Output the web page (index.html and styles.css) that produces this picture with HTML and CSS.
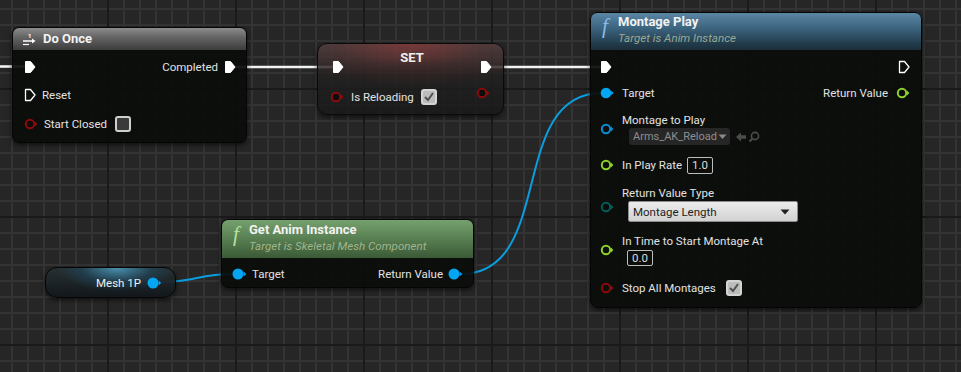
FILE: index.html
```html
<!DOCTYPE html>
<html lang="en">
<head>
    <meta charset="UTF-8">
    <title>Blueprint Graph</title>
    <link rel="stylesheet" href="styles.css">
</head>
<body>
    <div class="graph">
        <svg class="wires" width="961" height="372" viewBox="0 0 961 372">
            <g fill="none" stroke="#f2f2f2" stroke-width="2.6">
                <path d="M0 66.5H26"/>
                <path d="M234 67H334"/>
                <path d="M490 67H602"/>
            </g>
            <g fill="none" stroke="#0a9ee0" stroke-width="2">
                <path d="M160 282C198 282 196 274 234 274"/>
                <path d="M461 274C556 274 507 93 602 93"/>
            </g>
        </svg>

        <!-- Do Once -->
        <div class="node do-once">
            <div class="node-head head-gray">
                <svg class="once-icon" width="16" height="14" viewBox="0 0 16 14">
                    <text x="6" y="6" font-size="6" font-weight="bold" fill="#fff" font-family="Roboto, sans-serif">1</text>
                    <path d="M1 9H12" stroke="#fff" stroke-width="1.5"/>
                    <path d="M10 6.5L13.5 9L10 11.5Z" fill="#fff"/>
                    <path d="M1 12.5H7" stroke="#fff" stroke-width="1.2"/>
                </svg>
                <span class="node-title">Do Once</span>
            </div>
            <div class="node-body">
                <div class="row">
                    <svg class="pin" width="12" height="14" viewBox="0 0 12 14"><path d="M1.5 1.5h5l4.5 5.5-4.5 5.5h-5z" fill="#fff" stroke="#fff" stroke-linejoin="round"/></svg>
                    <span class="grow"></span>
                    <span class="label">Completed</span>
                    <svg class="pin" width="12" height="14" viewBox="0 0 12 14"><path d="M1.5 1.5h5l4.5 5.5-4.5 5.5h-5z" fill="#fff" stroke="#fff" stroke-linejoin="round"/></svg>
                </div>
                <div class="row">
                    <svg class="pin" width="12" height="14" viewBox="0 0 12 14"><path d="M1.5 1.5h5l4.5 5.5-4.5 5.5h-5z" fill="none" stroke="#fff" stroke-width="1.3" stroke-linejoin="round"/></svg>
                    <span class="label">Reset</span>
                </div>
                <div class="row row-tall">
                    <svg class="pin" width="14" height="12" viewBox="0 0 14 12"><circle cx="6" cy="6" r="4.2" fill="#0c0c0c" stroke="#8e0a0a" stroke-width="2"/><path d="M11 3.6l2.4 2.4-2.4 2.4z" fill="#8e0a0a"/></svg>
                    <span class="label">Start Closed</span>
                    <span class="check"></span>
                </div>
            </div>
        </div>

        <!-- SET -->
        <div class="node set-node">
            <div class="set-top">
                <svg class="pin set-pin" width="12" height="14" viewBox="0 0 12 14"><path d="M1.5 1.5h5l4.5 5.5-4.5 5.5h-5z" fill="#fff" stroke="#fff" stroke-linejoin="round"/></svg>
                <span class="set-title">SET</span>
                <svg class="pin set-pin" width="12" height="14" viewBox="0 0 12 14"><path d="M1.5 1.5h5l4.5 5.5-4.5 5.5h-5z" fill="#fff" stroke="#fff" stroke-linejoin="round"/></svg>
            </div>
            <div class="set-var">
                <svg class="pin" width="14" height="12" viewBox="0 0 14 12"><circle cx="6" cy="6" r="4.2" fill="#0c0c0c" stroke="#8e0a0a" stroke-width="2"/><path d="M11 3.6l2.4 2.4-2.4 2.4z" fill="#8e0a0a"/></svg>
                <span class="label">Is Reloading</span>
                <span class="check checked">
                    <svg width="12" height="12" viewBox="0 0 12 12"><path d="M2 6l3 3 5-7" fill="none" stroke="#505050" stroke-width="2"/></svg>
                </span>
                <span class="grow"></span>
                <svg class="pin pin-up" width="14" height="12" viewBox="0 0 14 12"><circle cx="6" cy="6" r="4.2" fill="#0c0c0c" stroke="#8e0a0a" stroke-width="2"/><path d="M11 3.6l2.4 2.4-2.4 2.4z" fill="#8e0a0a"/></svg>
            </div>
        </div>

        <!-- Montage Play -->
        <div class="node montage">
            <div class="node-head head-blue func-head">
                <span class="func-f f-blue">f</span>
                <div class="func-titles">
                    <span class="node-title">Montage Play</span>
                    <span class="subtitle">Target is Anim Instance</span>
                </div>
            </div>
            <div class="node-body montage-body">
                <div class="row row-m">
                    <svg class="pin" width="12" height="14" viewBox="0 0 12 14"><path d="M1.5 1.5h5l4.5 5.5-4.5 5.5h-5z" fill="#fff" stroke="#fff" stroke-linejoin="round"/></svg>
                    <span class="grow"></span>
                    <svg class="pin" width="12" height="14" viewBox="0 0 12 14"><path d="M1.5 1.5h5l4.5 5.5-4.5 5.5h-5z" fill="none" stroke="#fff" stroke-width="1.3" stroke-linejoin="round"/></svg>
                </div>
                <div class="row row-m">
                    <svg class="pin" width="14" height="12" viewBox="0 0 14 12"><circle cx="6" cy="6" r="5.3" fill="#02a6f2"/><path d="M11.2 3.6l2.4 2.4-2.4 2.4z" fill="#02a6f2"/></svg>
                    <span class="label">Target</span>
                    <span class="grow"></span>
                    <span class="label">Return Value</span>
                    <svg class="pin" width="14" height="12" viewBox="0 0 14 12"><circle cx="6" cy="6" r="4.2" fill="#0c0c0c" stroke="#8ed12a" stroke-width="2"/><path d="M11 3.6l2.4 2.4-2.4 2.4z" fill="#8ed12a"/></svg>
                </div>
                <div class="row-block first-block">
                    <svg class="pin" width="14" height="12" viewBox="0 0 14 12"><circle cx="6" cy="6" r="4.2" fill="#0c0c0c" stroke="#0a8fd6" stroke-width="2"/><path d="M11 3.6l2.4 2.4-2.4 2.4z" fill="#0a8fd6"/></svg>
                    <div class="block-col">
                        <span class="label">Montage to Play</span>
                        <div class="asset-line">
                            <span class="asset">Arms_AK_Reload<svg width="9" height="6" viewBox="0 0 9 6"><path d="M0.5 0.5h8L4.5 5z" fill="#8a8a8a"/></svg></span>
                            <svg class="asset-tools" width="28" height="14" viewBox="0 0 28 14">
                                <path d="M1 7L6 2.5V5.2H11V8.8H6V11.5Z" fill="#4c4c4c"/>
                                <circle cx="20" cy="6" r="3.6" fill="none" stroke="#4c4c4c" stroke-width="1.6"/>
                                <path d="M17.4 8.6L14.5 11.5" stroke="#4c4c4c" stroke-width="2"/>
                            </svg>
                        </div>
                    </div>
                </div>
                <div class="row-block row-s">
                    <svg class="pin" width="14" height="12" viewBox="0 0 14 12"><circle cx="6" cy="6" r="4.2" fill="#0c0c0c" stroke="#8ed12a" stroke-width="2"/><path d="M11 3.6l2.4 2.4-2.4 2.4z" fill="#8ed12a"/></svg>
                    <span class="label">In Play Rate</span>
                    <span class="num">1.0</span>
                </div>
                <div class="row-block">
                    <svg class="pin pin-low" width="14" height="12" viewBox="0 0 14 12"><circle cx="6" cy="6" r="4.2" fill="#0c0c0c" stroke="#045c5c" stroke-width="2"/><path d="M11 3.6l2.4 2.4-2.4 2.4z" fill="#045c5c"/></svg>
                    <div class="block-col">
                        <span class="label">Return Value Type</span>
                        <span class="combo">Montage Length<svg width="10" height="6" viewBox="0 0 10 6"><path d="M0.5 0.5h9L5 5.5z" fill="#222"/></svg></span>
                    </div>
                </div>
                <div class="row-block">
                    <svg class="pin" width="14" height="12" viewBox="0 0 14 12"><circle cx="6" cy="6" r="4.2" fill="#0c0c0c" stroke="#8ed12a" stroke-width="2"/><path d="M11 3.6l2.4 2.4-2.4 2.4z" fill="#8ed12a"/></svg>
                    <div class="block-col">
                        <span class="label">In Time to Start Montage At</span>
                        <span class="num num-under">0.0</span>
                    </div>
                </div>
                <div class="row-block row-s last-block">
                    <svg class="pin" width="14" height="12" viewBox="0 0 14 12"><circle cx="6" cy="6" r="4.2" fill="#0c0c0c" stroke="#8e0a0a" stroke-width="2"/><path d="M11 3.6l2.4 2.4-2.4 2.4z" fill="#8e0a0a"/></svg>
                    <span class="label">Stop All Montages</span>
                    <span class="check checked">
                        <svg width="12" height="12" viewBox="0 0 12 12"><path d="M2 6l3 3 5-7" fill="none" stroke="#505050" stroke-width="2"/></svg>
                    </span>
                </div>
            </div>
        </div>

        <!-- Get Anim Instance -->
        <div class="node anim">
            <div class="node-head head-green func-head">
                <span class="func-f f-green">f</span>
                <div class="func-titles">
                    <span class="node-title">Get Anim Instance</span>
                    <span class="subtitle">Target is Skeletal Mesh Component</span>
                </div>
            </div>
            <div class="node-body anim-body">
                <div class="row">
                    <svg class="pin" width="15" height="12" viewBox="0 0 15 12"><circle cx="6" cy="6" r="5.5" fill="#02a6f2"/><path d="M11.6 3.6l2.6 2.4-2.6 2.4z" fill="#02a6f2"/></svg>
                    <span class="label">Target</span>
                    <span class="grow"></span>
                    <span class="label">Return Value</span>
                    <svg class="pin" width="15" height="12" viewBox="0 0 15 12"><circle cx="6" cy="6" r="5.5" fill="#02a6f2"/><path d="M11.6 3.6l2.6 2.4-2.6 2.4z" fill="#02a6f2"/></svg>
                </div>
            </div>
        </div>

        <!-- Mesh 1P variable -->
        <div class="node mesh">
            <span class="label">Mesh 1P</span>
            <svg class="pin" width="15" height="12" viewBox="0 0 15 12"><circle cx="6" cy="6" r="5.5" fill="#02a6f2"/><path d="M11.6 3.6l2.6 2.4-2.6 2.4z" fill="#02a6f2"/></svg>
        </div>
    </div>
</body>
</html>
```

FILE: styles.css
```css
body {
    margin: 0;
    background: #262626;
    font-family: Roboto, "Noto Sans", sans-serif;
}

.graph {
    position: relative;
    width: 961px;
    height: 372px;
    overflow: hidden;
    background-color: #262626;
    background-image:
        linear-gradient(90deg, #1a1a1a 2px, transparent 2px),
        linear-gradient(#1a1a1a 2px, transparent 2px),
        linear-gradient(90deg, #343434 2px, transparent 2px),
        linear-gradient(#343434 2px, transparent 2px);
    background-size: 128px 128px, 128px 128px, 16px 16px, 16px 16px;
    background-position: 107px 0, 0 88px, 11px 0, 0 8px;
}

.wires {
    position: absolute;
    left: 0;
    top: 0;
}

/* nodes sit on a free canvas */
.node {
    position: absolute;
    box-sizing: border-box;
    background: rgba(11, 13, 11, 0.93);
    border: 1px solid #050505;
    border-radius: 7px;
    box-shadow: 0 2px 5px rgba(0, 0, 0, 0.6);
    color: #e2e2e2;
    font-size: 11.5px;
}

.node-head {
    display: flex;
    align-items: center;
    border-radius: 6px 6px 0 0;
}

.node-title {
    font-size: 13px;
    font-weight: bold;
    color: #f2f2f2;
    line-height: 16px;
}

.subtitle {
    font-size: 11.6px;
    font-style: italic;
    line-height: 17px;
    color: rgba(196, 208, 170, 0.72);
}

.head-gray {
    height: 22px;
    padding-left: 9px;
    gap: 5px;
    background: linear-gradient(#8c8c8c, #626262 45%, #3c3c3c);
}

.head-blue {
    background: linear-gradient(180deg, #5a86a4 0%, #3d6580 40%, #213949 85%, #1c2f3b 100%);
}

.head-green {
    background: linear-gradient(180deg, #77a06f 0%, #5a8254 45%, #3b5a37 100%);
}

.func-head {
    align-items: flex-start;
    height: 37px;
    box-sizing: border-box;
    padding: 1px 10px 0 11px;
}

.func-titles {
    display: flex;
    flex-direction: column;
}

.func-f {
    font-family: "Liberation Serif", serif;
    font-style: italic;
    font-size: 21px;
    line-height: 22px;
    width: 16px;
    margin-top: 1px;
}

.f-blue { color: #86bdea; }
.f-green { color: #b4e29e; }

.row {
    display: flex;
    align-items: center;
    height: 28px;
    padding: 0 10px 0 11px;
    gap: 6px;
}

.row-tall {
    height: 30px;
}

.grow {
    flex: 1;
}

.pin {
    flex: none;
    display: block;
}

.label {
    white-space: nowrap;
    line-height: 16px;
}

.node-body {
    padding-top: 3px;
}

.check {
    box-sizing: border-box;
    width: 16px;
    height: 16px;
    margin-left: 2px;
    border: 2px solid #cfcfcf;
    border-radius: 3px;
    background: #3a3a3a;
    display: flex;
    align-items: center;
    justify-content: center;
}

.check.checked {
    background: #bcbcbc;
    border-color: #d4d4d4;
}

/* Do Once */
.do-once {
    left: 12px;
    top: 27px;
    width: 235px;
    height: 116px;
}

/* SET */
.set-node {
    left: 317px;
    top: 43px;
    width: 187px;
    height: 72px;
    border-radius: 10px;
    padding-top: 6px;
    border-color: #0a0a0a;
    background:
        radial-gradient(ellipse 75% 60% at 50% 0%, rgba(140, 55, 55, 0.7), rgba(100, 45, 45, 0.3) 55%, transparent 100%),
        linear-gradient(rgba(75, 68, 68, 0.85), rgba(34, 32, 32, 0.82) 42%, rgba(24, 24, 24, 0.82));
}

.set-top {
    display: flex;
    align-items: flex-start;
    padding: 0 11px 0 14px;
}

.set-title {
    flex: 1;
    text-align: center;
    font-size: 13px;
    font-weight: bold;
    line-height: 16px;
    color: #f0f0f0;
}

.set-pin {
    margin-top: 10px;
}

.set-var {
    display: flex;
    align-items: center;
    height: 22px;
    margin-top: 12px;
    padding: 0 13px 0 12px;
    gap: 7px;
}

.set-var .check {
    margin-left: 0;
}

.pin-up {
    margin-bottom: 8px;
}

/* Montage Play */
.montage {
    left: 590px;
    top: 12px;
    width: 332px;
    height: 296px;
    border-radius: 8px;
}

.montage-body {
    padding: 4px 0 0 0;
}

.montage-body .row,
.montage-body .row-block {
    padding: 0 11px 0 9px;
}

.row-m {
    height: 26px;
    gap: 8px;
}

.row-block {
    display: flex;
    align-items: center;
    gap: 8px;
    margin-top: 11px;
}

.first-block {
    margin-top: 6px;
}

.last-block {
    margin-top: 13px;
}

.row-s {
    height: 18px;
}

.block-col {
    display: flex;
    flex-direction: column;
    align-items: flex-start;
}

.asset-line {
    display: flex;
    align-items: center;
    gap: 5px;
    margin-left: 7px;
}

.asset {
    display: flex;
    align-items: center;
    gap: 1px;
    height: 17px;
    padding: 0 3px 0 4px;
    border-radius: 3px;
    background: #262626;
    color: #8e8e8e;
    font-size: 11px;
}

.num {
    box-sizing: border-box;
    height: 17px;
    padding: 0 4px;
    border: 1px solid #bdbdbd;
    border-radius: 2px;
    line-height: 15px;
    font-size: 11.5px;
    color: #dcdcdc;
}

.row-s .num {
    margin-left: -3px;
}

.num-under {
    margin: 1px 0 0 5px;
    height: 16px;
    line-height: 14px;
}

.combo {
    box-sizing: border-box;
    display: flex;
    align-items: center;
    justify-content: space-between;
    width: 170px;
    height: 21px;
    margin-left: 6px;
    padding: 0 7px 0 4px;
    border: 1px solid #8c8c8c;
    border-radius: 2px;
    background: linear-gradient(#ececec, #d2d2d2);
    color: #1e1e1e;
    font-size: 11.5px;
}

.pin-low {
    margin-top: 6px;
}

/* Get Anim Instance */
.anim {
    left: 221px;
    top: 219px;
    width: 253px;
    height: 69px;
}

.anim .func-head {
    height: 38px;
    padding-top: 2px;
}

.anim-body {
    padding-top: 4px;
}

.anim-body .row {
    height: 24px;
    padding: 0 10px;
    gap: 5px;
}

/* Mesh 1P variable */
.mesh {
    left: 45px;
    top: 267px;
    width: 131px;
    height: 31px;
    border-radius: 12px;
    display: flex;
    align-items: center;
    justify-content: flex-end;
    gap: 6px;
    padding-right: 13px;
    background:
        radial-gradient(ellipse 45% 80% at 55% 0%, rgba(80, 160, 195, 0.85), rgba(30, 80, 105, 0.5) 60%, transparent 100%),
        linear-gradient(rgba(40, 48, 52, 0.95), rgba(16, 22, 26, 0.95));
}

.mesh .label {
    color: #f0f0f0;
}
```
